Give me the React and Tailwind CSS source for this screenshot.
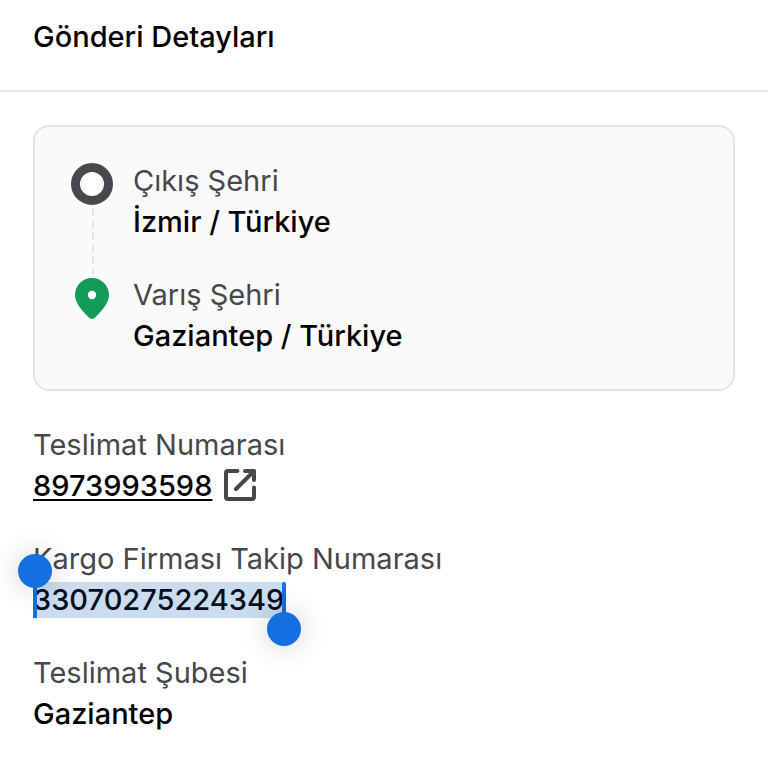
const details = [
  { id: 'delivery', label: 'Teslimat Numarası', value: '8973993598', link: true },
  { id: 'tracking', label: 'Kargo Firması Takip Numarası', value: '33070275224349', selected: true },
  { id: 'branch', label: 'Teslimat Şubesi', value: 'Gaziantep' },
];

function OriginIcon() {
  return (
    <svg className="h-[42px] w-[42px] shrink-0" viewBox="0 0 42 42" aria-hidden="true">
      <circle cx="21" cy="21" r="16.5" fill="#fff" stroke="#46494b" strokeWidth="9" />
    </svg>
  );
}

function PinIcon() {
  return (
    <svg className="h-[42px] w-[34px] shrink-0" viewBox="0 0 34 42" aria-hidden="true">
      <path
        d="M17 0C7.400 0 0 7.600 0 17c0 7 5 13.500 13.800 22.600a4.400 4.400 0 0 0 6.400 0C29 30.500 34 24 34 17 34 7.600 26.600 0 17 0Z"
        fill="#129c57"
      />
      <circle cx="17" cy="17" r="4.2" fill="#fff" />
    </svg>
  );
}

function ExternalIcon() {
  return (
    <svg
      className="-mt-0.5 h-8 w-8 shrink-0"
      viewBox="0 0 32 32"
      fill="none"
      stroke="#46484b"
      strokeWidth="4"
      strokeLinejoin="round"
      strokeLinecap="round"
      aria-hidden="true"
    >
      <path d="M13.500 2H4a2 2 0 0 0-2 2v24a2 2 0 0 0 2 2h24a2 2 0 0 0 2-2V18.500" />
      <path d="M21 2h9v9M30 2L12 20" />
    </svg>
  );
}

// Highlighted text with the two drag handles of a touch selection
function SelectedText({ children }) {
  return (
    <span className="relative inline-block bg-[#cbdcee] leading-9 text-[#03101f]">
      {children}
      <span className="absolute top-0 left-0 h-full w-1 bg-[#146fe0]" />
      <span className="absolute top-0 -right-0.5 h-full w-1 rounded-t-full bg-[#146fe0]" />
      <span className="absolute -top-7 -left-[15px] size-[34px] rounded-full bg-[#146fe0] shadow-[0_0_28px_rgba(0,0,0,0.2)]" />
      <span className="absolute -right-[17px] -bottom-7 size-[34px] rounded-full bg-[#146fe0] shadow-[0_0_28px_rgba(0,0,0,0.2)]" />
    </span>
  );
}

function Field({ label, children }) {
  return (
    <div>
      <dt className="text-[#46484b]">{label}</dt>
      <dd className="font-medium text-black">{children}</dd>
    </div>
  );
}

export default function App() {
  return (
    <main className="min-h-screen bg-white font-['Inter',sans-serif] text-[29px] leading-[41px]">
      <header className="border-b-2 border-[#e5e5e5] px-[33px] pt-4 pb-[33px]">
        <h1 className="font-medium text-black">Gönderi Detayları</h1>
      </header>

      <section className="px-[33px] pt-[33px] pb-8">
        <div className="flex gap-5 rounded-[16px] border-2 border-[#e5e5e5] bg-[#fafafa] px-9 py-[33px]">
          <div className="flex flex-col items-center pt-[3px] pb-9">
            <OriginIcon />
            <svg className="my-1 w-1 flex-1" height="65" aria-hidden="true">
              <line x1="3" y1="0" x2="3" y2="100%" stroke="#e4e4e4" strokeWidth="2" strokeDasharray="7 5" />
            </svg>
            <PinIcon />
          </div>
          <dl className="flex flex-col gap-8">
            <Field label="Çıkış Şehri">İzmir / Türkiye</Field>
            <Field label="Varış Şehri">Gaziantep / Türkiye</Field>
          </dl>
        </div>

        <dl className="mt-[33px] flex flex-col gap-8">
          {details.map((item) => (
            <Field key={item.id} label={item.label}>
              {item.link && (
                <a href="#" className="inline-flex items-center gap-3">
                  <span className="underline decoration-2 underline-offset-3">{item.value}</span>
                  <ExternalIcon />
                </a>
              )}
              {item.selected && <SelectedText>{item.value}</SelectedText>}
              {!item.link && !item.selected && item.value}
            </Field>
          ))}
        </dl>
      </section>
    </main>
  );
}
